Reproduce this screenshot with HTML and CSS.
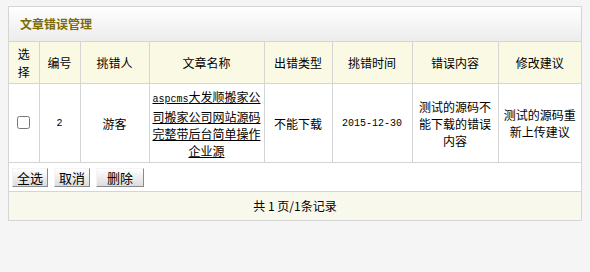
FILE: index.html
```html
<!DOCTYPE html>
<html>
<head>
<meta charset="utf-8">
<link rel="stylesheet" href="styles.css">
</head>
<body>
<div class="panel">
  <div class="title">文章错误管理</div>
  <table class="grid">
    <colgroup>
      <col class="c1"><col class="c2"><col class="c3"><col class="c4"><col class="c5"><col class="c6"><col class="c7"><col class="c8">
    </colgroup>
    <thead>
      <tr>
        <th>选<br>择</th>
        <th>编号</th>
        <th>挑错人</th>
        <th>文章名称</th>
        <th>出错类型</th>
        <th>挑错时间</th>
        <th>错误内容</th>
        <th>修改建议</th>
      </tr>
    </thead>
    <tbody>
      <tr class="data">
        <td><input type="checkbox" class="chk"></td>
        <td class="mono">2</td>
        <td>游客</td>
        <td class="name"><a href="#" class="link"><span class="mono">aspcms</span><span>大发顺搬家公司搬家公司网站源码完整带后台简单操作企业源</span></a></td>
        <td>不能下载</td>
        <td class="mono">2015-12-30</td>
        <td>测试的源码不能下载的错误内容</td>
        <td>测试的源码重新上传建议</td>
      </tr>
    </tbody>
  </table>
  <div class="actions">
    <button class="btn w1">全选</button>
    <button class="btn w1">取消</button>
    <button class="btn w2">删除</button>
  </div>
  <div class="pager">共 1 页/1条记录</div>
</div>
</body>
</html>
```
FILE: styles.css
```css
html, body {
  margin: 0;
  padding: 0;
  background: #f5f5f5;
}
body {
  padding: 6px 8px;
  font-family: "Noto Sans CJK SC", "DejaVu Sans", sans-serif;
  font-size: 12px;
  color: #000;
}
.panel {
  width: 572px;
  border: 1px solid #d5d5d5;
  background: #fff;
}
.title {
  height: 34px;
  line-height: 34px;
  padding-left: 11px;
  font-size: 12px;
  font-weight: bold;
  color: #7d6b05;
  background: linear-gradient(#ffffff, #ececec);
  border-bottom: 1px solid #d5d5d5;
}
.grid {
  width: 572px;
  border-collapse: collapse;
  table-layout: fixed;
}
.grid th, .grid td {
  border-left: 1px solid #d5d5d5;
  border-bottom: 1px solid #d5d5d5;
  text-align: center;
  padding: 0 4px;
  line-height: 17px;
}
.grid th:first-child, .grid td:first-child {
  border-left: none;
}
.grid th {
  height: 41px;
  background: #fafae4;
  font-weight: normal;
  font-size: 12px;
  line-height: 18px;
}
.grid td {
  height: 78px;
}
.grid td.name {
  padding: 0 1px;
}
.c1 { width: 30px; }
.c2 { width: 41px; }
.c3 { width: 69px; }
.c4 { width: 115px; }
.c5 { width: 68px; }
.c6 { width: 80px; }
.c7 { width: 86px; }
.c8 { width: 83px; }
.mono {
  font-family: "Liberation Mono", "DejaVu Sans Mono", monospace;
  font-size: 10px;
}
.grid td.mono {
  font-size: 10px;
}
.link {
  color: #000;
  text-decoration: underline;
  word-break: break-all;
}
.chk {
  margin: 0;
  width: 13px;
  height: 13px;
}
.actions {
  height: 28px;
  display: flex;
  align-items: center;
  gap: 6px;
  padding-left: 3px;
  border-bottom: 1px solid #d5d5d5;
}
.btn {
  height: 19px;
  padding: 0;
  font-family: "Noto Sans CJK SC", sans-serif;
  font-size: 13px;
  line-height: 17px;
  color: #000;
  background: linear-gradient(#ffffff, #dcdcdc);
  border: 1px solid #f4f4f4;
  border-right-color: #8a8a8a;
  border-bottom-color: #8a8a8a;
  border-radius: 0;
}
.w1 { width: 36px; }
.w2 { width: 48px; }
.pager {
  height: 28px;
  line-height: 28px;
  text-align: center;
  background: #f8f9ec;
  font-size: 12px;
}
```
